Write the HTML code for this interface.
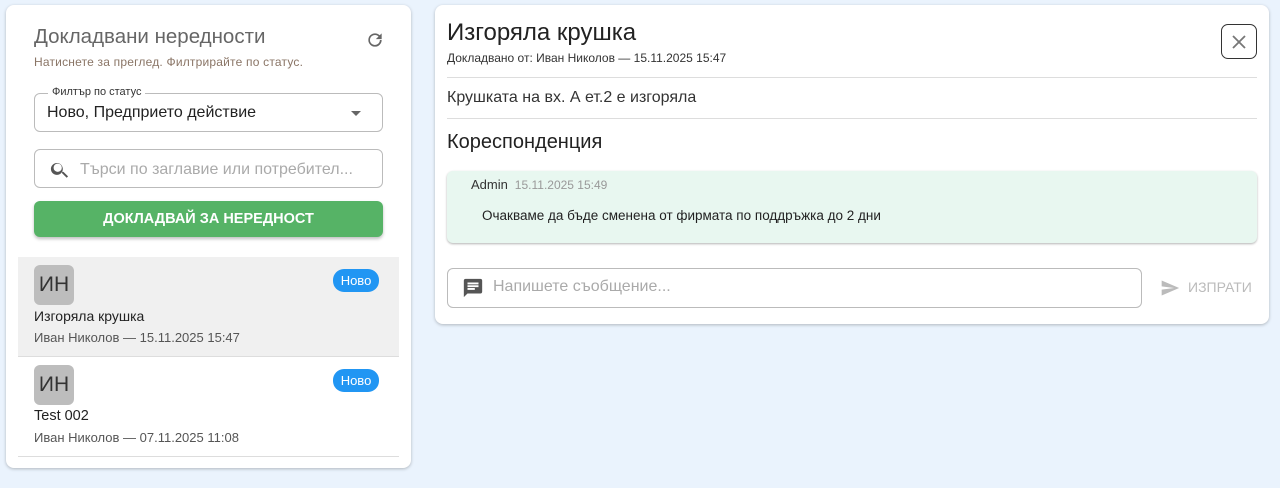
<!DOCTYPE html>
<html><head><meta charset="utf-8"><style>
*{box-sizing:border-box;margin:0;padding:0}
body{width:1280px;height:488px;background:#eaf3fd;font-family:"Liberation Sans",sans-serif;position:relative;overflow:hidden;color:#222}
.card{position:absolute;background:#fff;border-radius:8px;box-shadow:0 1px 3px rgba(0,0,0,.25)}
.abs{position:absolute;white-space:nowrap}
.field{position:absolute;border:1px solid #bbb;border-radius:6px}
.badge{position:absolute;background:#2196f3;color:#fff;font-size:13px;border-radius:11px;width:46px;height:23px;line-height:23px;text-align:center}
.av{position:absolute;width:40px;height:40px;background:#bdbdbd;border-radius:6px;color:#333;font-size:21px;line-height:40px;text-align:center}
</style></head><body>
<div class="card" style="left:6px;top:5px;width:405px;height:463px">
  <div class="abs" style="left:28px;top:20px;font-size:20.5px;color:#666">Докладвани нередности</div>
  <svg class="abs" style="left:359px;top:25px" width="20" height="20" viewBox="0 0 24 24"><path fill="#666" d="M17.65 6.35A7.96 7.96 0 0012 4a8 8 0 108 8h-2.1A6 6 0 1112 6c1.66 0 3.14.69 4.22 1.78L13 11h7V4z"/></svg>
  <div class="abs" style="left:28px;top:50px;font-size:12px;color:#8a7566;letter-spacing:.2px">Натиснете за преглед. Филтрирайте по статус.</div>
  <div class="field" style="left:28px;top:88px;width:349px;height:39px"></div>
  <div class="abs" style="left:42px;top:81px;background:#fff;padding:0 4px;font-size:11px;color:#333">Филтър по статус</div>
  <div class="abs" style="left:41px;top:99px;font-size:16px;color:#222">Ново, Предприето действие</div>
  <div class="abs" style="left:345px;top:106px;border:5px solid transparent;border-top-color:#666;border-bottom:0"></div>
  <div class="field" style="left:28px;top:144px;width:349px;height:39px"></div>
  <svg class="abs" style="left:43px;top:154px" width="22" height="22" viewBox="0 0 24 24"><path fill="#555" d="M15.5 14h-.8l-.3-.3A6.5 6.5 0 1014 14.4l.3.3v.8l5 5 1.5-1.5-5-5zm-6 0a4.5 4.5 0 110-9 4.5 4.5 0 010 9z"/></svg>
  <div class="abs" style="left:74px;top:156px;font-size:16px;color:#aaa">Търси по заглавие или потребител...</div>
  <div class="abs" style="left:28px;top:196px;width:349px;height:36px;background:#56b366;border-radius:6px;color:#fff;font-weight:bold;font-size:14.5px;text-align:center;line-height:36px;box-shadow:0 2px 3px rgba(0,0,0,.25)">ДОКЛАДВАЙ ЗА НЕРЕДНОСТ</div>
  <div class="abs" style="left:12px;top:252px;width:381px;height:100px;background:#f0f0f0;border-bottom:1px solid #ddd"></div>
  <div class="av" style="left:28px;top:260px">ИН</div>
  <div class="badge" style="left:327px;top:264px">Ново</div>
  <div class="abs" style="left:28px;top:303px;font-size:14px">Изгоряла крушка</div>
  <div class="abs" style="left:28px;top:325px;font-size:13px;color:#555">Иван Николов — 15.11.2025 15:47</div>
  <div class="abs" style="left:12px;top:352px;width:381px;height:100px;border-bottom:1px solid #ddd"></div>
  <div class="av" style="left:28px;top:360px">ИН</div>
  <div class="badge" style="left:327px;top:364px">Ново</div>
  <div class="abs" style="left:28px;top:403px;font-size:14.5px">Test 002</div>
  <div class="abs" style="left:28px;top:425px;font-size:13px;color:#555">Иван Николов — 07.11.2025 11:08</div>
</div>
<div class="card" style="left:435px;top:5px;width:834px;height:319px">
  <div class="abs" style="left:12px;top:14px;font-size:24px;color:#222">Изгоряла крушка</div>
  <div class="abs" style="left:12px;top:46px;font-size:12px;color:#333">Докладвано от: Иван Николов — 15.11.2025 15:47</div>
  <div class="abs" style="left:786px;top:19px;width:36px;height:35px;border:1px solid #333;border-radius:7px"></div>
  <svg class="abs" style="left:795px;top:28px" width="18" height="18" viewBox="0 0 18 18"><path d="M3 3L15 15M15 3L3 15" stroke="#777" stroke-width="1.8"/></svg>
  <div class="abs" style="left:12px;top:72px;width:810px;border-top:1px solid #ddd"></div>
  <div class="abs" style="left:12px;top:84px;font-size:16px;color:#333">Крушката на вх. А ет.2 е изгоряла</div>
  <div class="abs" style="left:12px;top:113px;width:810px;border-top:1px solid #ddd"></div>
  <div class="abs" style="left:12px;top:126px;font-size:20px;color:#222">Кореспонденция</div>
  <div class="abs" style="left:12px;top:166px;width:810px;height:72px;background:#e8f7f0;border-radius:6px;box-shadow:0 1px 2px rgba(0,0,0,.3)"></div>
  <div class="abs" style="left:36px;top:172px;font-size:13px;color:#333">Admin <span style="color:#999;font-size:12px">&nbsp;15.11.2025 15:49</span></div>
  <div class="abs" style="left:47px;top:203px;font-size:13.5px;color:#222">Очакваме да бъде сменена от фирмата по поддръжка до 2 дни</div>
  <div class="field" style="left:12px;top:263px;width:695px;height:40px"></div>
  <svg class="abs" style="left:27px;top:272px" width="22" height="22" viewBox="0 0 24 24"><path fill="#555" d="M20 2H4a2 2 0 00-2 2v18l4-4h14a2 2 0 002-2V4a2 2 0 00-2-2zM6 9h12v2H6zm8 5H6v-2h8zm4-6H6V6h12z"/></svg>
  <div class="abs" style="left:58px;top:273px;font-size:16px;color:#aaa">Напишете съобщение...</div>
  <svg class="abs" style="left:725px;top:273px" width="20" height="20" viewBox="0 0 24 24"><path fill="#bbb" d="M2 21l21-9L2 3v7l15 2-15 2z"/></svg>
  <div class="abs" style="left:753px;top:274px;font-size:14px;color:#bbb">ИЗПРАТИ</div>
</div>
</body></html>
